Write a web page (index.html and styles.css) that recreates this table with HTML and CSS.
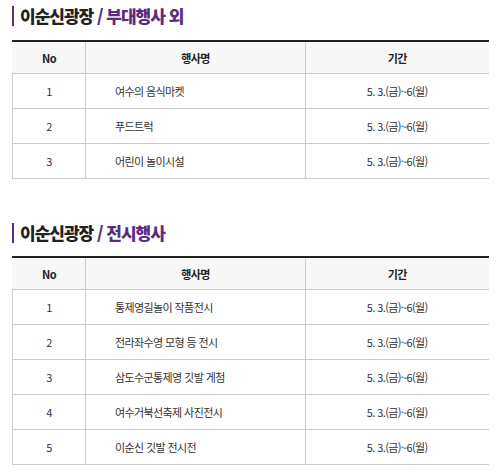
FILE: index.html
```html
<!DOCTYPE html>
<html lang="ko">
<head>
<meta charset="utf-8">
<link rel="stylesheet" href="styles.css">
</head>
<body>
<div class="wrap">
  <h3 class="title">이순신광장 <span class="sub">/ 부대행사 외</span></h3>
  <table class="tbl">
    <colgroup><col class="c-no"><col class="c-name"><col class="c-date"></colgroup>
    <thead><tr><th>No</th><th>행사명</th><th>기간</th></tr></thead>
    <tbody>
      <tr><td>1</td><td class="name">여수의 음식마켓</td><td>5. 3.(금)~6(월)</td></tr>
      <tr><td>2</td><td class="name">푸드트럭</td><td>5. 3.(금)~6(월)</td></tr>
      <tr><td>3</td><td class="name">어린이 놀이시설</td><td>5. 3.(금)~6(월)</td></tr>
    </tbody>
  </table>
  <h3 class="title second">이순신광장 <span class="sub">/ 전시행사</span></h3>
  <table class="tbl">
    <colgroup><col class="c-no"><col class="c-name"><col class="c-date"></colgroup>
    <thead><tr><th>No</th><th>행사명</th><th>기간</th></tr></thead>
    <tbody>
      <tr><td>1</td><td class="name">통제영길놀이 작품전시</td><td>5. 3.(금)~6(월)</td></tr>
      <tr><td>2</td><td class="name">전라좌수영 모형 등 전시</td><td>5. 3.(금)~6(월)</td></tr>
      <tr><td>3</td><td class="name">삼도수군통제영 깃발 게첨</td><td>5. 3.(금)~6(월)</td></tr>
      <tr><td>4</td><td class="name">여수거북선축제 사진전시</td><td>5. 3.(금)~6(월)</td></tr>
      <tr><td>5</td><td class="name">이순신 깃발 전시전</td><td>5. 3.(금)~6(월)</td></tr>
    </tbody>
  </table>
</div>
</body>
</html>
```

FILE: styles.css
```css
html, body {
  margin: 0;
  padding: 0;
  background: #fff;
}
body {
  font-family: "Noto Sans CJK KR", "Noto Sans", sans-serif;
  color: #333;
}
.wrap {
  padding: 6px 10px 0 12px;
}
.title {
  margin: 0 0 14px 0;
  height: 20px;
  line-height: 20px;
  border-left: 2px solid #5a2d82;
  padding-left: 6px;
  font-size: 17px;
  font-weight: 900;
  color: #222;
  letter-spacing: -1px;
}
.title .sub {
  color: #5a2d82;
}
.title.second {
  margin-top: 44px;
  margin-bottom: 13px;
}
.tbl {
  width: 476px;
  border-collapse: collapse;
  table-layout: fixed;
  border-top: 2px solid #222;
  font-size: 11px;
  letter-spacing: -0.6px;
}
.c-no { width: 73px; }
.c-name { width: 220px; }
.c-date { width: 183px; }
.tbl th {
  height: 31px;
  background: #f7f7f7;
  font-weight: 700;
  color: #222;
  border-bottom: 1px solid #ccc;
  border-left: 1px solid #ccc;
  padding: 0;
}
.tbl th:first-child { border-left: 1px solid #f7f7f7; }
.tbl td {
  height: 34px;
  padding: 0;
  text-align: center;
  color: #333;
  border-bottom: 1px solid #ccc;
  border-left: 1px solid #ccc;
}
.tbl td.name {
  text-align: left;
  padding-left: 29px;
}
```
